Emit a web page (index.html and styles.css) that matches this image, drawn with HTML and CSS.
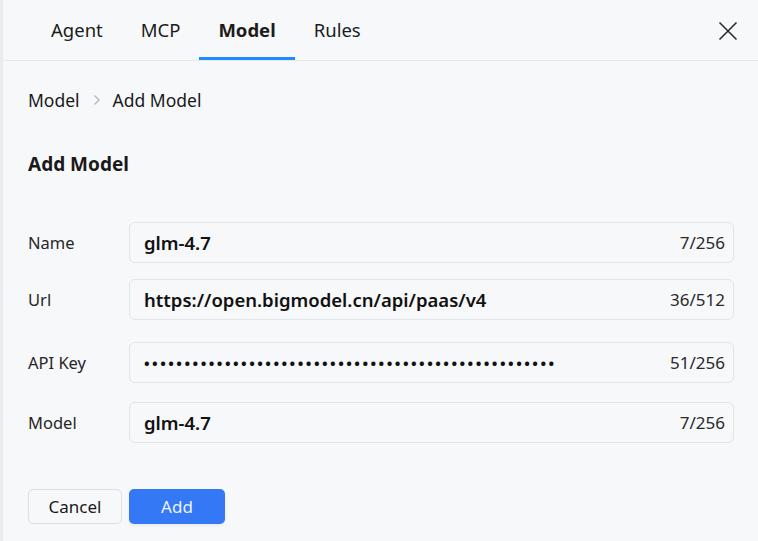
FILE: index.html
```html
<!DOCTYPE html>
<html lang="en">
<head>
<meta charset="utf-8">
<title>Add Model</title>
<link rel="stylesheet" href="styles.css">
</head>
<body>
<div class="panel">
  <header class="header">
    <nav class="tabs">
      <span class="tab">Agent</span>
      <span class="tab">MCP</span>
      <span class="tab tab-active">Model</span>
      <span class="tab">Rules</span>
    </nav>
    <button class="close" aria-label="Close">
      <svg width="20" height="20" viewBox="0 0 20 20"><path d="M1.5 1.5 L18.5 18.5 M18.5 1.5 L1.5 18.5" stroke="#2b2b2b" stroke-width="1.6" fill="none"/></svg>
    </button>
  </header>
  <main class="content">
    <div class="crumbs">
      <span>Model</span>
      <svg class="chev" width="8" height="12" viewBox="0 0 8 12"><path d="M1.5 1.5 L6 6 L1.5 10.5" stroke="#b5b8bd" stroke-width="1.4" fill="none"/></svg>
      <span>Add Model</span>
    </div>
    <h1 class="title">Add Model</h1>
    <form class="form">
      <div class="row row-name">
        <label class="label">Name</label>
        <div class="field"><span class="value">glm-4.7</span><span class="count">7/256</span></div>
      </div>
      <div class="row row-url">
        <label class="label">Url</label>
        <div class="field"><span class="value">https://open.bigmodel.cn/api/paas/v4</span><span class="count">36/512</span></div>
      </div>
      <div class="row row-key">
        <label class="label">API Key</label>
        <div class="field"><span class="value dots">•••••••••••••••••••••••••••••••••••••••••••••••••••</span><span class="count">51/256</span></div>
      </div>
      <div class="row">
        <label class="label">Model</label>
        <div class="field"><span class="value">glm-4.7</span><span class="count">7/256</span></div>
      </div>
      <div class="actions">
        <button type="button" class="btn btn-cancel">Cancel</button>
        <button type="button" class="btn btn-add">Add</button>
      </div>
    </form>
  </main>
</div>
</body>
</html>
```
FILE: styles.css
```css
* { box-sizing: border-box; }
html, body { margin: 0; padding: 0; }
body {
  width: 758px;
  height: 541px;
  overflow: hidden;
  background: #f7f8fa;
  font-family: "Segoe UI", "Noto Sans", "Open Sans", sans-serif;
  color: #1a1a1a;
}
.panel {
  height: 541px;
  border-left: 3px solid #eaebed;
  display: flex;
  flex-direction: column;
}
.header {
  height: 61px;
  border-bottom: 1px solid #e6e8eb;
  display: flex;
  align-items: flex-start;
  justify-content: space-between;
  padding-left: 29px;
  padding-right: 20px;
}
.tabs { display: flex; height: 60px; }
.tab {
  padding: 0 19px;
  height: 60px;
  font-size: 18.5px;
  color: #1c1c1c;
  border-bottom: 3px solid transparent;
  line-height: 60px;
}
.tab-active {
  font-weight: 700;
  border-bottom-color: #1f8bff;
}
.close {
  margin-top: 21px;
  border: 0;
  background: none;
  padding: 0;
  width: 20px;
  height: 20px;
}
.content { padding: 0 24px 0 25px; }
.crumbs {
  margin-top: 27px;
  display: flex;
  align-items: center;
  gap: 11px;
  font-size: 17.5px;
  height: 24px;
}
.chev { margin: 0 1px 0 2px; }
.title {
  margin: 40px 0 0;
  font-size: 19px;
  font-weight: 700;
  height: 24px;
  line-height: 24px;
}
.form { margin-top: 46px; display: flex; flex-direction: column; }
.row { display: flex; align-items: center; margin-bottom: 19px; }
.row-name { margin-bottom: 16px; }
.row-url { margin-bottom: 22px; }
.row-key { margin-bottom: 19px; }
.label { width: 101px; font-size: 16.5px; color: #262626; }
.field {
  flex: 1;
  height: 41px;
  border: 1px solid #e2e4e8;
  border-radius: 6px;
  display: flex;
  align-items: center;
  justify-content: space-between;
  padding: 0 8px 0 14px;
}
.value { font-size: 18.5px; font-weight: 600; color: #111; }
.dots { font-size: 15px; letter-spacing: 2.45px; font-weight: 700; }
.count { font-size: 17px; color: #2a2a2a; }
.actions { display: flex; gap: 7px; margin-top: 27px; }
.btn {
  height: 35px;
  border-radius: 5px;
  font-family: inherit;
  font-size: 17px;
  padding: 0;
}
.btn-cancel {
  width: 94px;
  background: #f7f8fa;
  border: 1px solid #dcdfe3;
  color: #1a1a1a;
}
.btn-add {
  width: 96px;
  background: #3478f6;
  border: 0;
  color: #eef3ff;
  box-shadow: 0 2px 3px rgba(0,0,0,0.06);
}
```
